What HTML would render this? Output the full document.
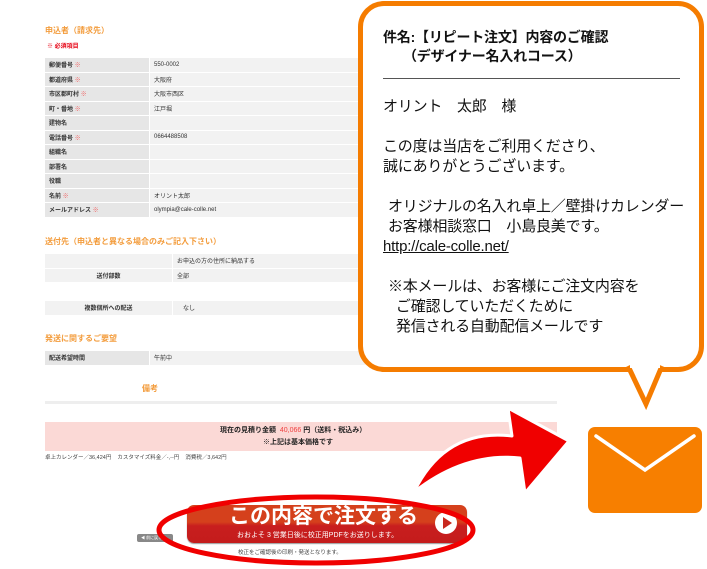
<!DOCTYPE html>
<html><head><meta charset="utf-8">
<style>
*{margin:0;padding:0;box-sizing:border-box}
body{width:707px;height:569px;overflow:hidden;background:#fff;position:relative;font-family:"Liberation Sans","Noto Sans CJK JP",sans-serif;color:#333}
.a{position:absolute;white-space:nowrap}
.h{color:#f39c3c;font-weight:bold;font-size:8px}
.req{color:#e60012;font-size:6px;font-weight:bold}
table{border-collapse:separate;border-spacing:0 1px;position:absolute;left:45px;font-size:6px}
td{height:13.5px;padding:0 4px;vertical-align:middle}
td.l{background:#e6e6e6;font-weight:bold;width:105px;border-right:1px solid #fff}
td.v{background:#f2f2f2;width:215px}
.r{color:#f05a5a}
.bub{position:absolute;left:358px;top:1px;width:346px;height:371px;border:5px solid #f57c00;border-radius:26px;background:#fff}
.bt{position:absolute;left:383px;font-size:15px;color:#111;line-height:20px;white-space:nowrap;letter-spacing:-0.2px}
</style></head><body>
<div class="a h" style="left:45px;top:25px">申込者（請求先）</div>
<div class="a req" style="left:47px;top:41px">※ 必須項目</div>
<table style="top:57px">
<tr><td class="l">郵便番号 <span class="r">※</span></td><td class="v">550-0002</td></tr>
<tr><td class="l">都道府県 <span class="r">※</span></td><td class="v">大阪府</td></tr>
<tr><td class="l">市区郡町村 <span class="r">※</span></td><td class="v">大阪市西区</td></tr>
<tr><td class="l">町・番地 <span class="r">※</span></td><td class="v">江戸堀</td></tr>
<tr><td class="l">建物名</td><td class="v"></td></tr>
<tr><td class="l">電話番号 <span class="r">※</span></td><td class="v">0664488508</td></tr>
<tr><td class="l">組織名</td><td class="v"></td></tr>
<tr><td class="l">部署名</td><td class="v"></td></tr>
<tr><td class="l">役職</td><td class="v"></td></tr>
<tr><td class="l">名前 <span class="r">※</span></td><td class="v">オリント太郎</td></tr>
<tr><td class="l">メールアドレス <span class="r">※</span></td><td class="v">olympia@cale-colle.net</td></tr>
</table>
<div class="a h" style="left:45px;top:236px">送付先（申込者と異なる場合のみご記入下さい）</div>
<table style="top:253px">
<tr><td class="v" style="width:128px;background:#f2f2f2;border-right:1px solid #fff"></td><td class="v" style="width:190px">お申込の方の住所に納品する</td></tr>
<tr><td class="v" style="width:128px;text-align:center;font-weight:bold;border-right:1px solid #fff">送付部数</td><td class="v">全部</td></tr>
</table>
<table style="top:300px">
<tr><td class="v" style="width:128px;text-align:center;font-weight:bold;border-right:1px solid #fff">複数個所への配送</td><td class="v" style="padding-left:10px">なし</td></tr>
</table>
<div class="a h" style="left:45px;top:333px">発送に関するご要望</div>
<table style="top:350px">
<tr><td class="l">配送希望時間</td><td class="v">午前中</td></tr>
</table>
<div class="a h" style="left:142px;top:383px">備考</div>
<div class="a" style="left:45px;top:401px;width:512px;height:3px;background:#eee"></div>
<div class="a" style="left:45px;top:422px;width:512px;height:29px;background:#fbd9d6"></div>
<div class="a" style="left:220px;top:425px;font-size:7px;font-weight:bold;color:#222">現在の見積り金額 <span style="color:#f04040;font-weight:normal">&nbsp;40,066</span> 円（送料・税込み）</div>
<div class="a" style="left:263px;top:437px;font-size:7px;font-weight:bold;color:#222">※上記は基本価格です</div>
<div class="a" style="left:45px;top:453px;font-size:5.5px;color:#444">卓上カレンダー／36,424円 &nbsp;&nbsp; カスタマイズ料金／-,--円 &nbsp;&nbsp; 消費税／3,642円</div>

<div class="bub"></div>
<svg class="a" style="left:0;top:0" width="707" height="569">
<path d="M628,366 L646,404 L662,366" fill="#fff" stroke="#f57c00" stroke-width="5" stroke-linejoin="miter"/>
<rect x="630" y="360" width="30" height="8" fill="#fff"/>
<rect x="588" y="427" width="114" height="86" rx="7" fill="#f77f00"/>
<path d="M596,436 L645,470 L694,436" fill="none" stroke="#fff" stroke-width="3.5" stroke-linecap="round"/>
<path d="M414,492 Q445,428 512,436 L508,408 L569,441 L525,493 L520,458 Q465,452 414,492 Z" fill="#f00000" stroke="#fff" stroke-width="3" stroke-linejoin="round"/>
</svg>
<div class="bt" style="top:27px;font-weight:bold;font-size:14px">件名:【リピート注文】内容のご確認</div>
<div class="bt" style="top:46px;left:403px;font-weight:bold;font-size:14px">（デザイナー名入れコース）</div>
<div class="a" style="left:383px;top:78px;width:297px;height:1px;background:#555"></div>
<div class="bt" style="top:97px">オリント　太郎　様</div>
<div class="bt" style="top:137px">この度は当店をご利用くださり、<br>誠にありがとうございます。</div>
<div class="bt" style="top:197px;left:388px">オリジナルの名入れ卓上／壁掛けカレンダー<br>お客様相談窓口　小島良美です。</div>
<div class="bt" style="top:237px;text-decoration:underline">http://cale-colle.net/</div>
<div class="bt" style="top:277px;left:388px">※本メールは、お客様にご注文内容を<br>&nbsp;&nbsp;ご確認していただくために<br>&nbsp;&nbsp;発信される自動配信メールです</div>

<div class="a" style="left:137px;top:534px;width:36px;height:8px;background:#888;border-radius:2px;font-size:4px;color:#fff;line-height:8px;padding-left:4px">◀ 前に戻る</div>
<div class="a" style="left:187px;top:505px;width:280px;height:38px;border-radius:7px;background:linear-gradient(#d5401c 0,#d5401c 45%,#c81e1e 55%,#c41c1c 100%);box-shadow:0 1px 1px #999"></div>
<div class="a" style="left:229px;top:505px;font-size:21px;font-weight:bold;color:#fff;line-height:24px">この内容で注文する</div>
<div class="a" style="left:435px;top:512px;width:22px;height:22px;border-radius:50%;background:#fff"></div>
<div class="a" style="left:443px;top:517px;width:0;height:0;border-left:9px solid #c8281e;border-top:6px solid transparent;border-bottom:6px solid transparent"></div>
<div class="a" style="left:237px;top:530px;font-size:7px;color:#fff">おおよそ 3 営業日後に校正用PDFをお送りします。</div>
<div class="a" style="left:238px;top:548px;font-size:5.5px;color:#444">校正をご確認後の印刷・発送となります。</div>
<svg class="a" style="left:0;top:0" width="707" height="569">
<ellipse cx="316" cy="530" rx="157" ry="33" fill="none" stroke="#f00000" stroke-width="5"/>
</svg>
</body></html>
